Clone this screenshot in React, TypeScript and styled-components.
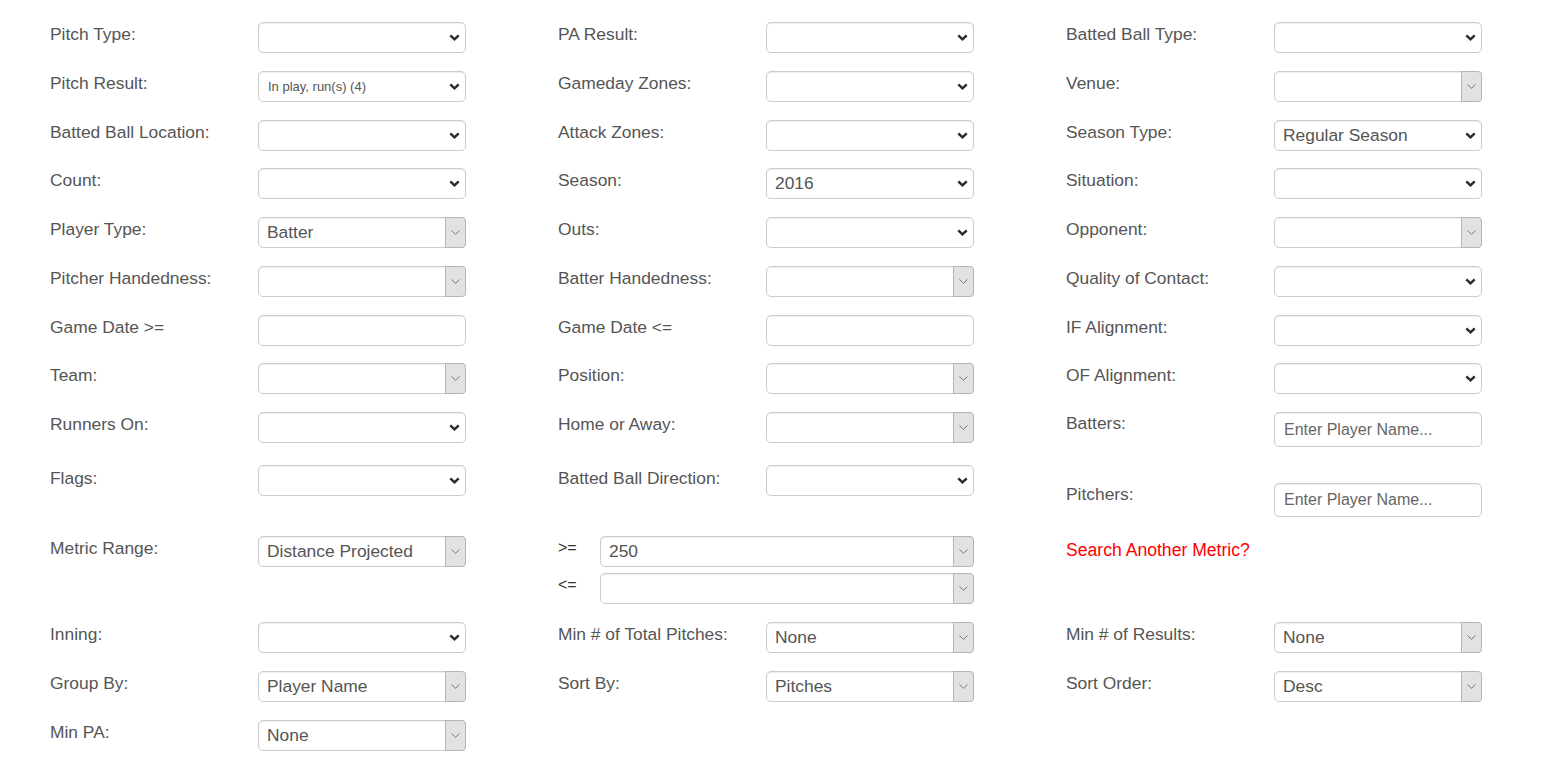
import React from "react";
import styled, { createGlobalStyle } from "styled-components";

const Global = createGlobalStyle`
  html, body { margin: 0; padding: 0; background: #fff; }
  body { font-family: "Liberation Sans", Arial, sans-serif; color: #555; overflow: hidden; }
`;

const Page = styled.div`
  padding: 22px 0 0 50px;
  display: flex;
  flex-direction: column;
`;

const Row = styled.div<{ $h: number }>`
  display: flex;
  height: ${(p) => p.$h}px;
  align-items: flex-start;
`;

const Cell = styled.div<{ $pad?: number }>`
  width: 508px;
  flex: none;
  display: flex;
  align-items: flex-start;
  padding-top: ${(p) => p.$pad || 0}px;
  box-sizing: border-box;
`;

const Label = styled.div<{ $off?: number }>`
  width: 208px;
  flex: none;
  font-size: 17.4px;
  line-height: 24px;
  color: #555;
  margin-top: ${(p) => p.$off || 0}px;
`;

const RedLink = styled.a`
  font-size: 17.6px;
  line-height: 24px;
  color: #f00;
  text-decoration: none;
  margin-top: 2px;
`;

const Box = styled.div<{ $w?: number; $h?: number }>`
  width: ${(p) => p.$w || 208}px;
  height: ${(p) => p.$h || 31}px;
  box-sizing: border-box;
  border: 1px solid #ccc;
  border-radius: 5px;
  background: #fff;
  box-shadow: inset 0 1px 1px rgba(0, 0, 0, 0.075);
  display: flex;
  align-items: center;
  position: relative;
  flex: none;
`;

const ValueText = styled.span<{ $small?: boolean }>`
  flex: 1;
  padding-left: ${(p) => (p.$small ? 9 : 8)}px;
  font-size: ${(p) => (p.$small ? 13 : 17.4)}px;
  color: #555;
  white-space: nowrap;
  overflow: hidden;
`;

const Placeholder = styled.span`
  flex: 1;
  padding-left: 9px;
  font-size: 16px;
  color: #666;
`;

const Chevron = styled.svg`
  width: 11px;
  height: 7px;
  margin-right: 5px;
  flex: none;
`;

const ArrowBox = styled.div`
  width: 21px;
  align-self: stretch;
  margin: -1px -1px -1px 0;
  box-sizing: border-box;
  background: #e2e2e2;
  border: 1px solid #b5b5b5;
  border-radius: 0 4px 4px 0;
  display: flex;
  align-items: center;
  justify-content: center;
`;

const OpStack = styled.div`
  display: flex;
  flex-direction: column;
  gap: 6px;
`;

const OpLine = styled.div`
  display: flex;
  align-items: flex-start;
`;

const OpLabel = styled.div`
  width: 42px;
  font-size: 16px;
  line-height: 24px;
  color: #333;
`;

type Ctl =
  | { t: "native"; v?: string; small?: boolean }
  | { t: "combo"; v?: string; w?: number }
  | { t: "text" }
  | { t: "player"; h?: number };

const NativeSelect = ({ v, small }: { v?: string; small?: boolean }) => (
  <Box>
    <ValueText $small={small}>{v}</ValueText>
    <Chevron viewBox="0 0 11 7">
      <path d="M1.3 1.3 L5.5 5.3 L9.7 1.3" fill="none" stroke="#2b2b2b" strokeWidth="2.5" />
    </Chevron>
  </Box>
);

const ComboSelect = ({ v, w }: { v?: string; w?: number }) => (
  <Box $w={w}>
    <ValueText>{v}</ValueText>
    <ArrowBox>
      <svg width="9" height="5" viewBox="0 0 9 5">
        <path d="M0.5 0.5 L4.5 4.3 L8.5 0.5" fill="none" stroke="#777" strokeWidth="1" />
      </svg>
    </ArrowBox>
  </Box>
);

const Control = ({ c }: { c: Ctl }) => {
  switch (c.t) {
    case "native":
      return <NativeSelect v={c.v} small={c.small} />;
    case "combo":
      return <ComboSelect v={c.v} w={c.w} />;
    case "text":
      return <Box />;
    case "player":
      return (
        <Box $h={c.h || 35}>
          <Placeholder>Enter Player Name...</Placeholder>
        </Box>
      );
  }
};

type CellDef = { label: string; c: Ctl; pad?: number; off?: number };

const rows: { h: number; cells: CellDef[] }[] = [
  {
    h: 48.75,
    cells: [
      { label: "Pitch Type:", c: { t: "native" } },
      { label: "PA Result:", c: { t: "native" } },
      { label: "Batted Ball Type:", c: { t: "native" } },
    ],
  },
  {
    h: 48.75,
    cells: [
      { label: "Pitch Result:", c: { t: "native", v: "In play, run(s) (4)", small: true } },
      { label: "Gameday Zones:", c: { t: "native" } },
      { label: "Venue:", c: { t: "combo" } },
    ],
  },
  {
    h: 48.75,
    cells: [
      { label: "Batted Ball Location:", c: { t: "native" } },
      { label: "Attack Zones:", c: { t: "native" } },
      { label: "Season Type:", c: { t: "native", v: "Regular Season" } },
    ],
  },
  {
    h: 48.75,
    cells: [
      { label: "Count:", c: { t: "native" } },
      { label: "Season:", c: { t: "native", v: "2016" } },
      { label: "Situation:", c: { t: "native" } },
    ],
  },
  {
    h: 48.75,
    cells: [
      { label: "Player Type:", c: { t: "combo", v: "Batter" } },
      { label: "Outs:", c: { t: "native" } },
      { label: "Opponent:", c: { t: "combo" } },
    ],
  },
  {
    h: 48.75,
    cells: [
      { label: "Pitcher Handedness:", c: { t: "combo" } },
      { label: "Batter Handedness:", c: { t: "combo" } },
      { label: "Quality of Contact:", c: { t: "native" } },
    ],
  },
  {
    h: 48.75,
    cells: [
      { label: "Game Date >=", c: { t: "text" } },
      { label: "Game Date <=", c: { t: "text" } },
      { label: "IF Alignment:", c: { t: "native" } },
    ],
  },
  {
    h: 48.75,
    cells: [
      { label: "Team:", c: { t: "combo" } },
      { label: "Position:", c: { t: "combo" } },
      { label: "OF Alignment:", c: { t: "native" } },
    ],
  },
  {
    h: 53,
    cells: [
      { label: "Runners On:", c: { t: "native" } },
      { label: "Home or Away:", c: { t: "combo" } },
      { label: "Batters:", c: { t: "player", h: 35 }, off: -1 },
    ],
  },
  {
    h: 71,
    cells: [
      { label: "Flags:", c: { t: "native" }, off: 1 },
      { label: "Batted Ball Direction:", c: { t: "native" }, off: 1 },
      { label: "Pitchers:", c: { t: "player", h: 34 }, pad: 18, off: -1 },
    ],
  },
];

const bottomRows: { h: number; cells: CellDef[] }[] = [
  {
    h: 49,
    cells: [
      { label: "Inning:", c: { t: "native" } },
      { label: "Min # of Total Pitches:", c: { t: "combo", v: "None" } },
      { label: "Min # of Results:", c: { t: "combo", v: "None" } },
    ],
  },
  {
    h: 49,
    cells: [
      { label: "Group By:", c: { t: "combo", v: "Player Name" } },
      { label: "Sort By:", c: { t: "combo", v: "Pitches" } },
      { label: "Sort Order:", c: { t: "combo", v: "Desc" } },
    ],
  },
];

const renderRow = (r: { h: number; cells: CellDef[] }, i: number) => (
  <Row $h={r.h} key={i}>
    {r.cells.map((c, j) => (
      <Cell key={j} $pad={c.pad}>
        <Label $off={c.off}>{c.label}</Label>
        <Control c={c.c} />
      </Cell>
    ))}
  </Row>
);

export default function App() {
  return (
    <>
      <Global />
      <Page>
        {rows.map(renderRow)}
        <Row $h={86}>
          <Cell>
            <Label>Metric Range:</Label>
            <ComboSelect v="Distance Projected" />
          </Cell>
          <Cell>
            <OpStack>
              <OpLine>
                <OpLabel>&gt;=</OpLabel>
                <ComboSelect v="250" w={374} />
              </OpLine>
              <OpLine>
                <OpLabel>&lt;=</OpLabel>
                <ComboSelect w={374} />
              </OpLine>
            </OpStack>
          </Cell>
          <Cell>
            <RedLink href="#">Search Another Metric?</RedLink>
          </Cell>
        </Row>
        {bottomRows.map((r, i) => renderRow(r, i + 100))}
        <Row $h={40}>
          <Cell>
            <Label>Min PA:</Label>
            <ComboSelect v="None" />
          </Cell>
        </Row>
      </Page>
    </>
  );
}
